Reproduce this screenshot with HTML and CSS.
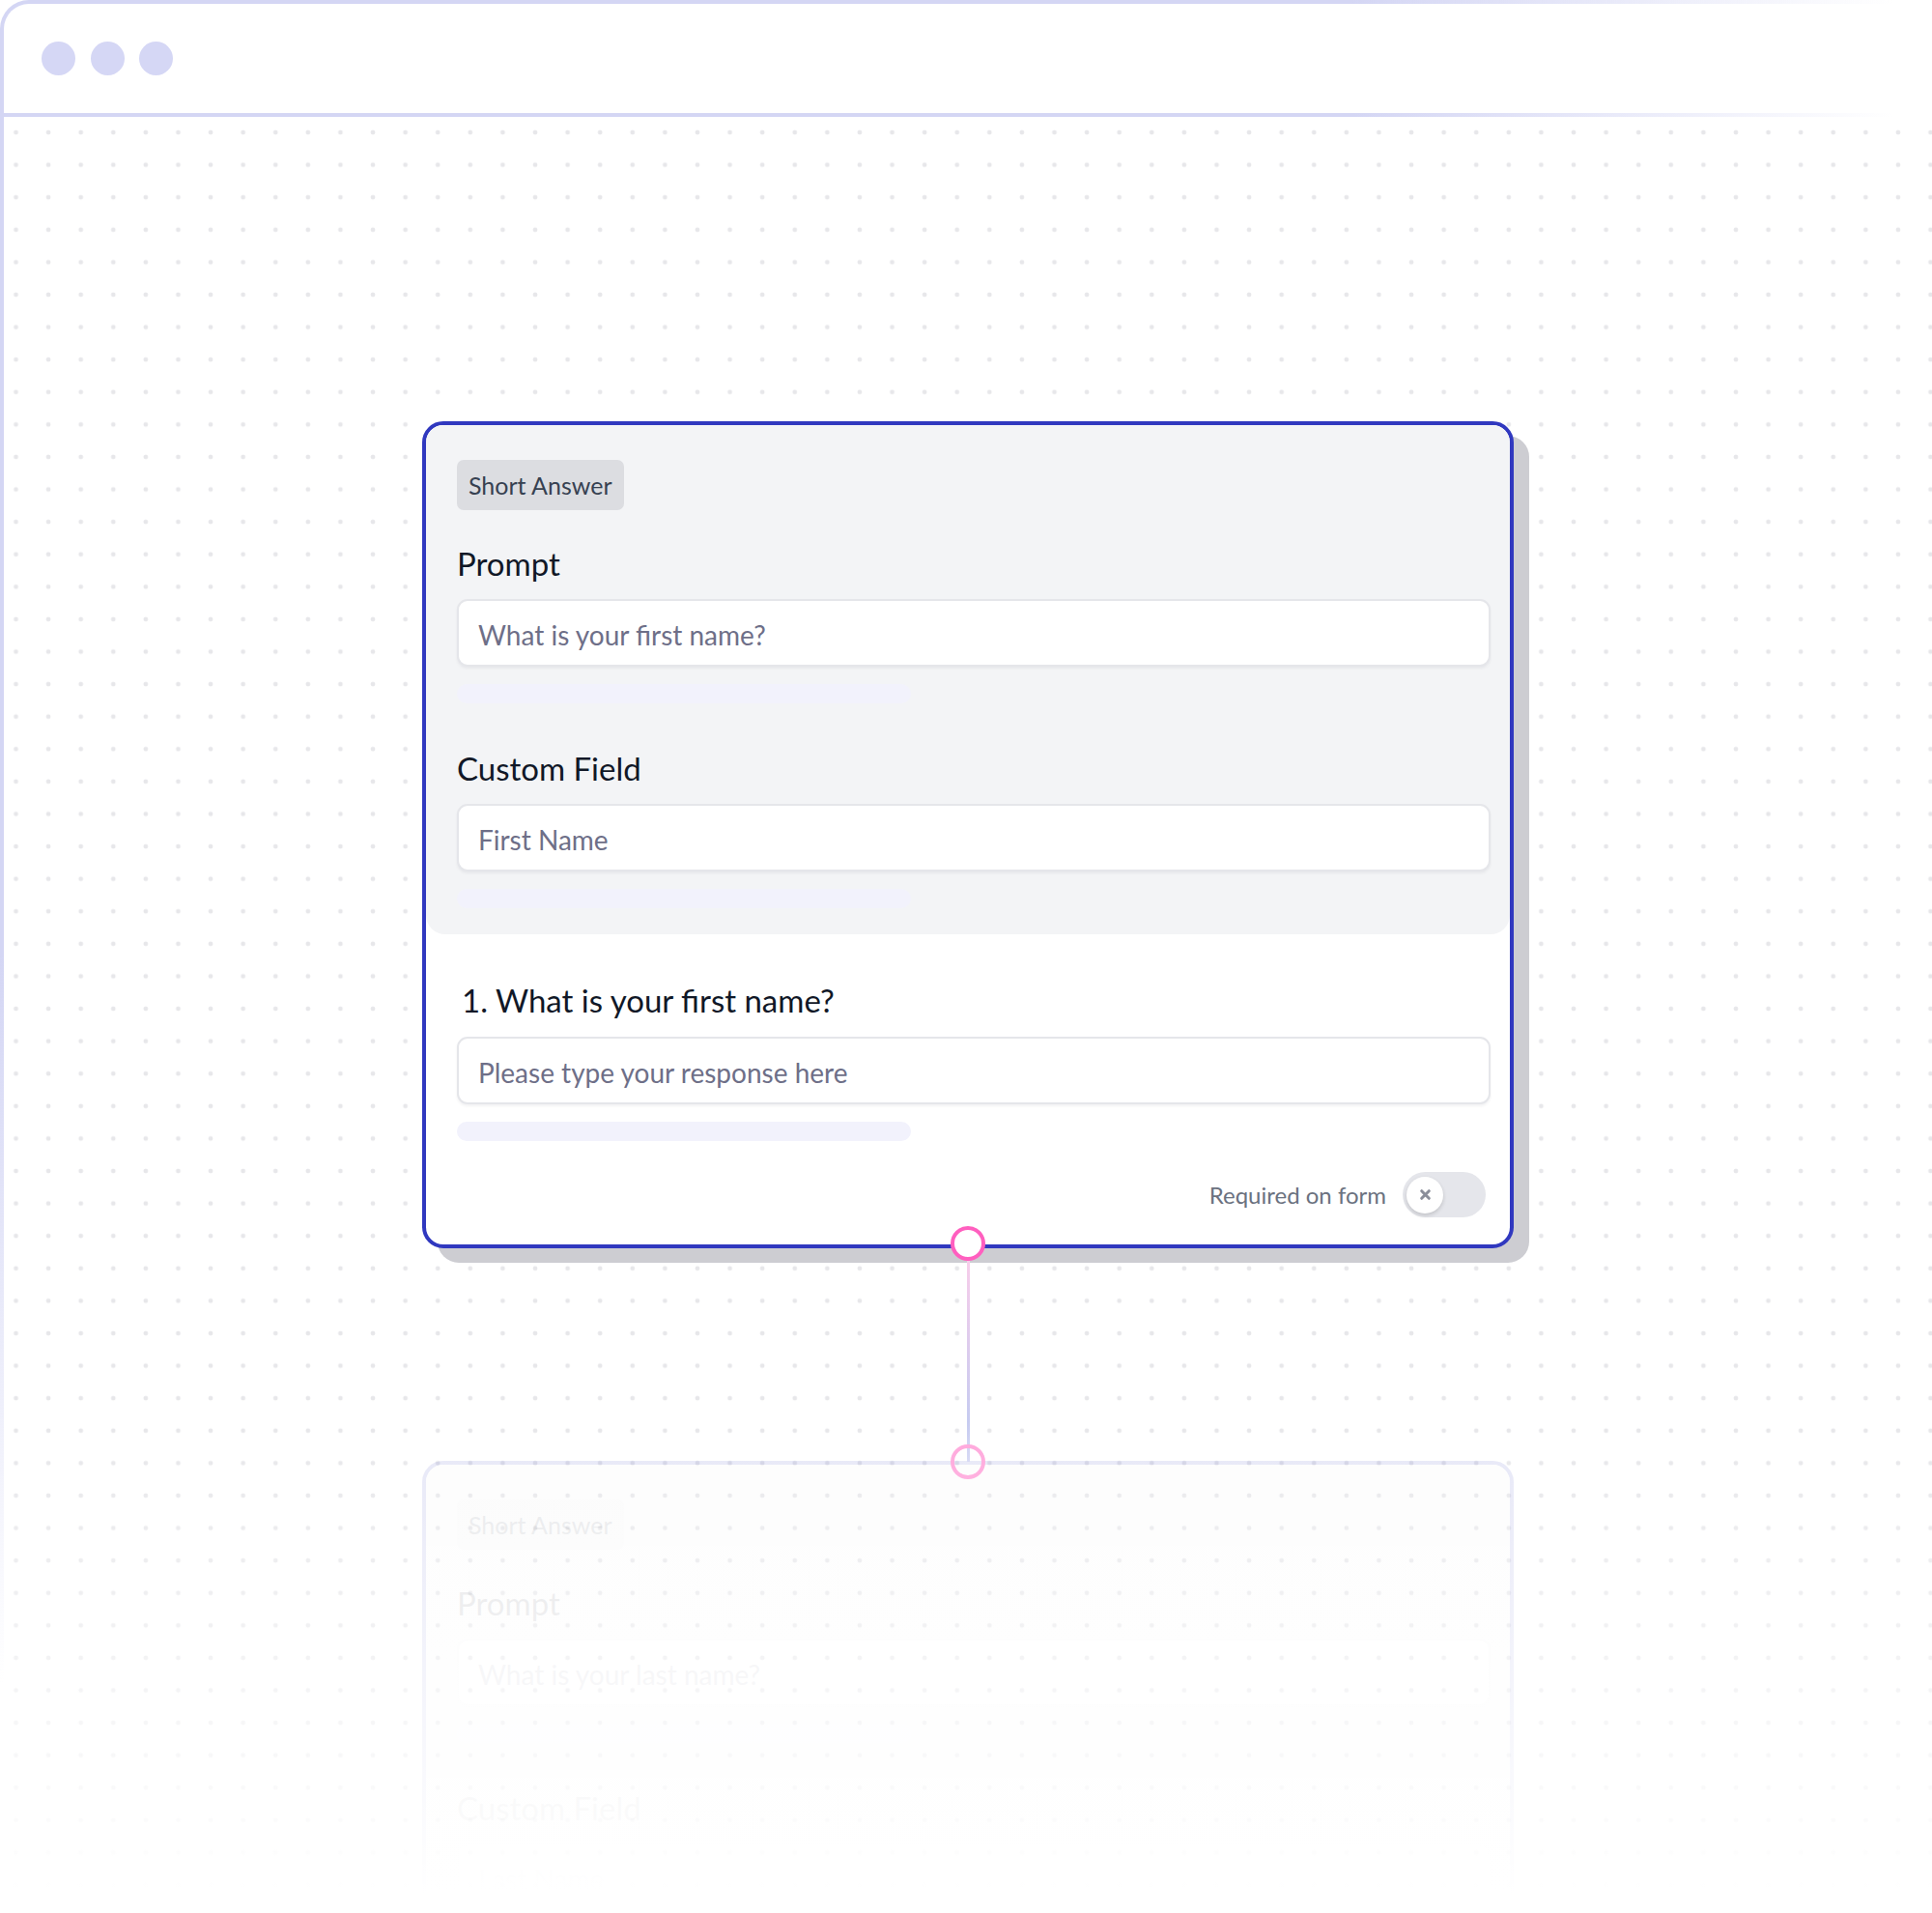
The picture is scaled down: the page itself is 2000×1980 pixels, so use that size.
FILE: index.html
```html
<!DOCTYPE html>
<html lang="en">
<head>
    <meta charset="UTF-8">
    <meta name="viewport" content="width=device-width, initial-scale=1.0">
    <title>Form Builder</title>
    <link rel="stylesheet" href="styles.css">
</head>
<body>
    <div class="window">
        <div class="titlebar">
            <span class="light"></span>
            <span class="light"></span>
            <span class="light"></span>
        </div>
        <div class="canvas">
            <div class="block block-active">
                <div class="block-editor">
                    <span class="badge">Short Answer</span>
                    <div class="field-label">Prompt</div>
                    <div class="text-input">What is your first name?</div>
                    <div class="skeleton"></div>
                    <div class="field-label">Custom Field</div>
                    <div class="text-input">First Name</div>
                    <div class="skeleton"></div>
                </div>
                <div class="block-preview">
                    <div class="question">1. What is your first name?</div>
                    <div class="text-input">Please type your response here</div>
                    <div class="skeleton"></div>
                    <div class="required-row">
                        <span>Required on form</span>
                        <span class="toggle">
                            <span class="knob">
                                <svg viewBox="0 0 12 12" width="13" height="13"><path d="M2.5 2.5 L9.5 9.5 M9.5 2.5 L2.5 9.5" /></svg>
                            </span>
                        </span>
                    </div>
                </div>
            </div>
            <div class="connector">
                <span class="port port-out"></span>
                <span class="wire"></span>
                <span class="port port-in"></span>
            </div>
            <div class="block block-ghost">
                <div class="block-editor">
                    <span class="badge">Short Answer</span>
                    <div class="field-label">Prompt</div>
                    <div class="text-input">What is your last name?</div>
                    <div class="skeleton"></div>
                    <div class="field-label">Custom Field</div>
                    <div class="text-input">Last Name</div>
                </div>
            </div>
        </div>
    </div>
</body>
</html>
```

FILE: styles.css
```css
* {
    box-sizing: border-box;
}
body {
    margin: 0;
    background: #fff;
    font-family: Lato, "Noto Sans", sans-serif;
    overflow: hidden;
}
.window {
    position: relative;
    display: flex;
    flex-direction: column;
    height: 1980px;
    border-top: 4px solid transparent;
    border-left: 4px solid transparent;
    border-top-left-radius: 30px;
    overflow: hidden;
    background:
        linear-gradient(#fff, #fff) padding-box,
        linear-gradient(to right, #d4d6f4 70%, rgba(212, 214, 244, 0) 98%) 0 0 / 100% 4px no-repeat border-box,
        linear-gradient(#d4d6f4 50%, rgba(212, 214, 244, 0) 88%) 0 0 / 4px 100% no-repeat border-box,
        linear-gradient(#d4d6f4, #d4d6f4) 0 0 / 40px 40px no-repeat border-box;
}
/* fade the bottom of the page out */
.window::after {
    content: "";
    position: absolute;
    left: 0;
    right: 0;
    bottom: 0;
    height: 500px;
    background: linear-gradient(rgba(255, 255, 255, 0), #fff 96%);
    pointer-events: none;
    z-index: 3;
}
.titlebar {
    display: flex;
    align-items: center;
    gap: 15.5px;
    height: 117px;
    padding: 0 0 4px 39px;
    background: linear-gradient(to right, #d4d6f4 70%, rgba(212, 214, 244, 0) 98%) left bottom / 100% 4px no-repeat;
    flex-shrink: 0;
}
.light {
    width: 35px;
    height: 35px;
    border-radius: 50%;
    background: #d5d7f5;
}
.canvas {
    flex: 1;
    display: flex;
    flex-direction: column;
    align-items: center;
    padding-top: 315px;
    background: radial-gradient(circle, #e7e7ea 0 2px, rgba(231, 231, 234, 0) 2.7px) -4.3px -0.8px / 33.6px 33.6px;
}
.block {
    width: 1130px;
    flex-shrink: 0;
    border: 4px solid #3038bf;
    border-radius: 22px;
    background: #fff;
    overflow: hidden;
}
.block-active {
    box-shadow: 16px 15px 0 #cdcdd2;
}
.block-ghost {
    opacity: 0.11;
}
.block-editor {
    display: flex;
    flex-direction: column;
    padding: 36px 20px 27px 32px;
    background: #f3f4f6;
    border-radius: 0 0 20px 20px;
}
.badge {
    align-self: flex-start;
    height: 52px;
    line-height: 52px;
    padding: 0 12px;
    border-radius: 7px;
    background: #dcdde1;
    color: #374151;
    font-size: 25px;
}
.field-label {
    margin: 35px 0 17px;
    font-size: 33px;
    line-height: 40px;
    color: #111827;
}
.skeleton + .field-label {
    margin-top: 47px;
}
.text-input {
    display: flex;
    align-items: center;
    height: 70px;
    padding: 3px 0 0 20px;
    border: 2px solid #e5e6ea;
    border-radius: 11px;
    background: #fff;
    box-shadow: 0 2px 3px rgba(17, 24, 39, 0.05);
    font-size: 28px;
    color: #6e6f88;
}
.skeleton {
    width: 470px;
    height: 20px;
    margin-top: 18px;
    border-radius: 10px;
    background: #f2f2fc;
}
.block-preview {
    display: flex;
    flex-direction: column;
    padding: 48px 20px 28px 32px;
}
.question {
    margin-bottom: 18px;
    padding-left: 5px;
    font-size: 33px;
    line-height: 40px;
    color: #111827;
}
.required-row {
    display: flex;
    justify-content: flex-end;
    align-items: center;
    gap: 17px;
    margin-top: 32px;
    padding-right: 5px;
    font-size: 24px;
    color: #6b7280;
}
.toggle {
    display: flex;
    align-items: center;
    width: 86px;
    height: 47px;
    padding-left: 4px;
    border-radius: 24px;
    background: #e5e6eb;
}
.knob {
    display: flex;
    align-items: center;
    justify-content: center;
    width: 38px;
    height: 38px;
    border-radius: 50%;
    background: #fff;
    box-shadow: 0 2px 4px rgba(0, 0, 0, 0.16);
}
.knob path {
    stroke: #8a8e9a;
    stroke-width: 2.8;
    stroke-linecap: round;
    fill: none;
}
.connector {
    position: relative;
    z-index: 1;
    display: flex;
    flex-direction: column;
    align-items: center;
    height: 220px;
    flex-shrink: 0;
}
.port {
    width: 36px;
    height: 36px;
    border-radius: 50%;
    flex-shrink: 0;
}
.port-out {
    margin-top: -23px;
    border: 4px solid #ff5fbf;
    background: #fff;
}
.wire {
    width: 3px;
    flex: 1;
    margin-bottom: -18px;
    background: linear-gradient(#f7cdea, #c6cbf0 80%, #d6d8f4);
}
.port-in {
    margin-bottom: -19px;
    border: 4px solid #ffa8dc;
}
```
